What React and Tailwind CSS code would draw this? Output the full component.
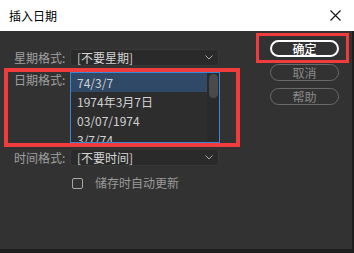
import React from "react";

const font = { fontFamily: '"Noto Sans CJK SC", "Noto Sans", sans-serif' };

const dateFormats = ["74/3/7", "1974年3月7日", "03/07/1974", "3/7/74"];

const Chevron = () => (
  <svg width="8" height="5" viewBox="0 0 8 5" className="shrink-0">
    <path d="M0.5 0.5 L4 4 L7.5 0.5" fill="none" stroke="#a8a8a8" strokeWidth="1" />
  </svg>
);

const Dropdown = ({ value }) => (
  <div className="w-[149px] h-[17px] bg-[#2a2a2a] border border-[#383838] rounded-[3px] flex items-center pl-[6px] pr-[5px] text-[12px] text-[#d4d4d4] leading-none">
    <span className="flex-1">{value}</span>
    <Chevron />
  </div>
);

const App = () => {
  return (
    <div
      className="relative w-[354px] h-[253px] bg-[#1e1e1e] flex flex-col overflow-hidden"
      style={font}
    >
      {/* 标题栏 */}
      <div className="h-[31px] bg-white flex items-center pl-[9px] pr-[13px] shrink-0">
        <span className="text-[12px] text-black flex-1">插入日期</span>
        <svg width="11" height="11" viewBox="0 0 11 11">
          <path d="M0.5 0.5 L10.5 10.5 M10.5 0.5 L0.5 10.5" stroke="#111" strokeWidth="1.1" />
        </svg>
      </div>

      {/* 内容 */}
      <div className="flex-1 bg-[#323232] mr-[2px] mb-[4px] flex">
        <div className="pl-[14px] pt-[18px] flex flex-col">
          {/* 星期格式 */}
          <div className="flex items-center h-[17px]">
            <span className="w-[56px] text-[12px] text-[#a0a0a0] leading-none">星期格式:</span>
            <Dropdown value="[不要星期]" />
          </div>

          {/* 日期格式 */}
          <div className="flex mt-[6px]">
            <span className="w-[56px] text-[12px] text-[#a0a0a0] leading-none pt-[2px]">日期格式:</span>
            <div className="w-[150px] h-[71px] border border-[#3a86d8] bg-[#2d2d2d] flex overflow-hidden">
              <div className="flex-1 flex flex-col">
                {dateFormats.map((item, i) => (
                  <div
                    key={item}
                    className={`h-[19px] shrink-0 flex items-center pl-[6px] text-[12px] leading-none text-[#d2d2d2] ${
                      i === 0 ? "bg-[#2f4966]" : ""
                    }`}
                  >
                    {item}
                  </div>
                ))}
              </div>
              <div className="w-[12px] bg-[#2a2a2a] flex justify-center pt-[1px]">
                <div className="w-[9px] h-[24px] rounded-full bg-[#4a4a4a]" />
              </div>
            </div>
          </div>

          {/* 时间格式 */}
          <div className="flex items-center h-[17px] mt-[6px]">
            <span className="w-[56px] text-[12px] text-[#a0a0a0] leading-none">时间格式:</span>
            <Dropdown value="[不要时间]" />
          </div>

          {/* 储存时自动更新 */}
          <div className="flex items-center mt-[11px] ml-[58px]">
            <div className="w-[11px] h-[11px] border border-[#a8a8a8] rounded-[2px]" />
            <span className="ml-[12px] text-[12px] text-[#9a9a9a] leading-none">储存时自动更新</span>
          </div>
        </div>

        {/* 按钮 */}
        <div className="ml-auto pr-[13px] pt-[9px] flex flex-col gap-[7px]">
          <button className="w-[69px] h-[17px] rounded-full border-2 border-white text-white text-[12px] leading-none font-medium flex items-center justify-center">
            确定
          </button>
          <button className="w-[69px] h-[17px] rounded-full border border-[#6a6a6a] text-[#8a8a8a] text-[12px] leading-none flex items-center justify-center">
            取消
          </button>
          <button className="w-[69px] h-[17px] rounded-full border border-[#6a6a6a] text-[#8a8a8a] text-[12px] leading-none flex items-center justify-center">
            帮助
          </button>
        </div>
      </div>

      {/* 红框标注 */}
      <div className="absolute left-[256px] top-[33px] w-[93px] h-[30px] border-[3px] border-[#f03c3c] pointer-events-none" />
      <div className="absolute left-[4px] top-[68px] w-[236px] h-[79px] border-[4px] border-[#f03c3c] pointer-events-none" />
    </div>
  );
};

export default App;
